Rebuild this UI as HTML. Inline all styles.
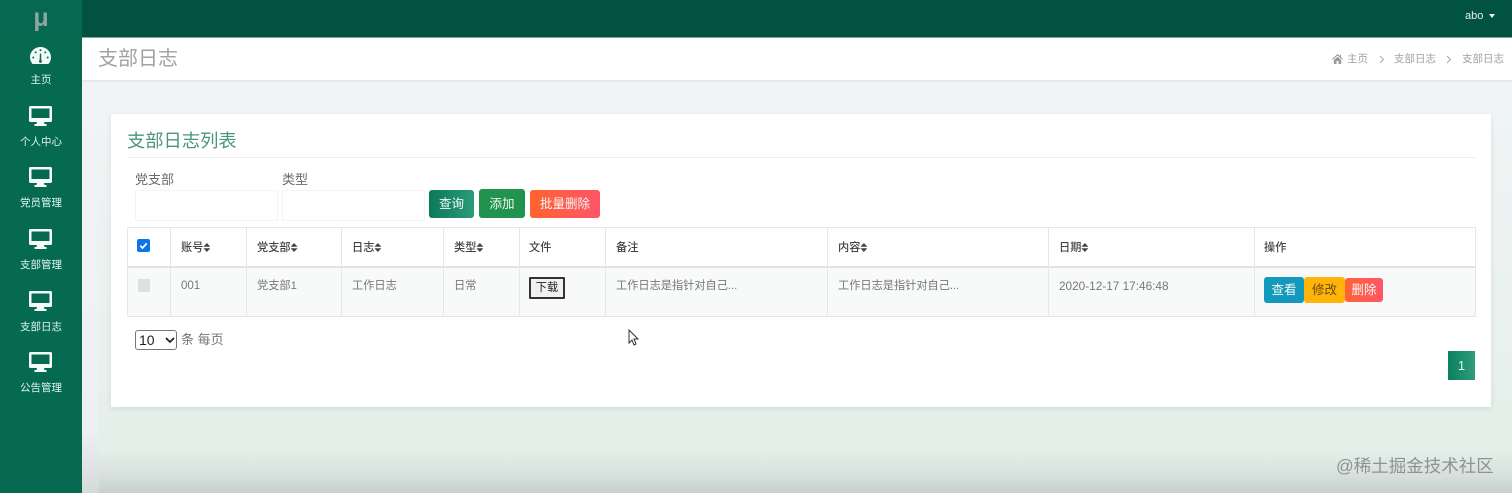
<!DOCTYPE html>
<html lang="zh"><head><meta charset="utf-8"><title>支部日志</title>
<style>
*{box-sizing:border-box}
html,body{margin:0;padding:0;width:1512px;height:493px;overflow:hidden;background:#e6f0eb;font-family:"Liberation Sans","Noto Sans CJK SC",sans-serif}
.a{position:absolute;white-space:nowrap}
#bg{left:82px;top:82px;width:1430px;height:411px;background:linear-gradient(180deg,#f0f4f5 0,#e9f1ee 60%,#e3efe9 90%,#d6dfdb 96%,#c8cfcc 100%)}
#bgl{left:82px;top:82px;width:17px;height:411px;background:linear-gradient(180deg,#f1f4f6,#edf0f3 85%,#d5dad8)}
#side{left:0;top:0;width:82px;height:493px;background:#056a50}
#logo{left:0;top:0;width:82px;height:37px;background:#066850;color:#8fa69e;font-size:25px;font-weight:bold;text-align:center;line-height:37px}
#top{left:82px;top:0;width:1430px;height:38px;background:#015240;border-bottom:1px solid #7fa9a0}
.user{left:1465px;top:10px;font-size:11px;color:#e4f0ec}
.caret{left:1489px;top:14px;width:0;height:0;border:3.5px solid transparent;border-top:4px solid #e4f0ec;border-bottom:0}
#hd{left:82px;top:38px;width:1430px;height:44px;background:#fff;border-bottom:2px solid #e7e9ec}
.ttl{left:98px;top:46px;font-size:20px;line-height:26px;color:#a2a2a2}
.bc{top:52px;font-size:10.5px;line-height:14px;color:#a0a0a0}
.mt{width:82px;left:0;text-align:center;font-size:10.5px;line-height:14px;color:#dff5ec}
#card{left:111px;top:114px;width:1380px;height:293px;background:#fff;box-shadow:0 2px 5px rgba(120,140,130,.18)}
.h2{left:127px;top:129px;font-size:18.300px;line-height:24px;color:#4a9676}
.hr{left:127px;top:157px;width:1349px;height:1px;background:#eef0ef}
.lb{top:172px;font-size:13px;line-height:16px;color:#6a6a6a}
.inp{top:190px;width:143px;height:31px;background:#fff;border:1px solid #f3f4f4;border-radius:2px}
.btn{color:#f3f8f5;font-size:12.5px;text-align:center;border-radius:3px}
.v{background:#e6e7e8;width:1px;top:227px;height:90px}
.th{top:241px;font-size:11.200px;line-height:14px;color:#444;font-weight:500}
.th i{display:inline-block;width:7px;height:9px;vertical-align:-1px;background:#444;clip-path:polygon(50% 0,100% 42%,0 42%,0 58%,100% 58%,50% 100%,0 58%,0 42%)}
.td{top:279px;font-size:11.200px;line-height:14px;color:#777}
</style></head><body>
<div class="a" id="bg"></div><div class="a" id="bgl"></div>
<div class="a" id="top"></div>
<div class="a user">abo</div><div class="a caret"></div>
<div class="a" id="side"></div>
<div class="a" id="logo">μ</div>

<svg class="a" style="left:30px;top:47px" width="21" height="17" viewBox="0 0 21 17"><path fill="#f2fbf7" fill-rule="evenodd" d="M10.500 0C4.700 0 0 4.600 0 10.300c0 2.600 1 5 2.500 6.700h16c1.600-1.700 2.500-4.100 2.500-6.700C21 4.600 16.300 0 10.500 0ZM10.500 2.200a1 1 0 1 1 0 2a1 1 0 0 1 0-2ZM5.700 4.400a1 1 0 1 1 0 2a1 1 0 0 1 0-2ZM15.300 4.400a1 1 0 1 1 0 2a1 1 0 0 1 0-2ZM3.300 9.500a1 1 0 1 1 0 2a1 1 0 0 1 0-2ZM17.700 9.500a1 1 0 1 1 0 2a1 1 0 0 1 0-2ZM9.900 6.500l1.200 0l.2 6.600a1.500 1.500 0 1 1-1.700 0Z"/></svg>
<div class="a mt" style="top:73px">主页</div>

<svg class="a" style="left:29px;top:106px" width="23" height="20" viewBox="0 0 23 20"><path fill="#f5fbf8" fill-rule="evenodd" d="M1.500 0h20A1.500 1.500 0 0 1 23 1.500v13a1.500 1.500 0 0 1-1.500 1.500H15l.5 2h2v2H5.500v-2h2l.5-2H1.500A1.500 1.500 0 0 1 0 14.500v-13A1.500 1.500 0 0 1 1.500 0ZM2.500 2.500v9.500h18V2.500Z"/></svg>
<div class="a mt" style="top:135px">个人中心</div>
<svg class="a" style="left:29px;top:167px" width="23" height="20" viewBox="0 0 23 20"><path fill="#f5fbf8" fill-rule="evenodd" d="M1.500 0h20A1.500 1.500 0 0 1 23 1.500v13a1.500 1.500 0 0 1-1.500 1.500H15l.5 2h2v2H5.500v-2h2l.5-2H1.500A1.500 1.500 0 0 1 0 14.500v-13A1.500 1.500 0 0 1 1.500 0ZM2.500 2.500v9.500h18V2.500Z"/></svg>
<div class="a mt" style="top:196px">党员管理</div>
<svg class="a" style="left:29px;top:229px" width="23" height="20" viewBox="0 0 23 20"><path fill="#f5fbf8" fill-rule="evenodd" d="M1.500 0h20A1.500 1.500 0 0 1 23 1.500v13a1.500 1.500 0 0 1-1.500 1.500H15l.5 2h2v2H5.500v-2h2l.5-2H1.500A1.500 1.500 0 0 1 0 14.500v-13A1.500 1.500 0 0 1 1.500 0ZM2.500 2.500v9.500h18V2.500Z"/></svg>
<div class="a mt" style="top:258px">支部管理</div>
<svg class="a" style="left:29px;top:291px" width="23" height="20" viewBox="0 0 23 20"><path fill="#f5fbf8" fill-rule="evenodd" d="M1.500 0h20A1.500 1.500 0 0 1 23 1.500v13a1.500 1.500 0 0 1-1.500 1.500H15l.5 2h2v2H5.500v-2h2l.5-2H1.500A1.500 1.500 0 0 1 0 14.500v-13A1.500 1.500 0 0 1 1.500 0ZM2.500 2.500v9.500h18V2.500Z"/></svg>
<div class="a mt" style="top:320px">支部日志</div>
<svg class="a" style="left:29px;top:352px" width="23" height="20" viewBox="0 0 23 20"><path fill="#f5fbf8" fill-rule="evenodd" d="M1.500 0h20A1.500 1.500 0 0 1 23 1.500v13a1.500 1.500 0 0 1-1.500 1.500H15l.5 2h2v2H5.500v-2h2l.5-2H1.500A1.500 1.500 0 0 1 0 14.500v-13A1.500 1.500 0 0 1 1.500 0ZM2.500 2.500v9.500h18V2.500Z"/></svg>
<div class="a mt" style="top:381px">公告管理</div>

<div class="a" id="hd"></div>
<div class="a ttl">支部日志</div>
<svg class="a" style="left:1332px;top:54px" width="11" height="10" viewBox="0 0 11 10"><path fill="#999" d="M5.500 0L0 5l.7.7L5.500 1.500l4.800 4.200L11 5L9 3.200V.7H7.800v1.400ZM1.800 6v4h2.700V7h2v3h2.700V6L5.500 2.800Z"/></svg>
<div class="a bc" style="left:1347px">主页</div>
<svg class="a" style="left:1379px;top:55px" width="6" height="9" viewBox="0 0 6 9"><path d="M1 1l3.500 3.500L1 8" fill="none" stroke="#aaa" stroke-width="1"/></svg>
<div class="a bc" style="left:1394px">支部日志</div>
<svg class="a" style="left:1446px;top:55px" width="6" height="9" viewBox="0 0 6 9"><path d="M1 1l3.500 3.500L1 8" fill="none" stroke="#aaa" stroke-width="1"/></svg>
<div class="a bc" style="left:1462px">支部日志</div>

<div class="a" id="card"></div>
<div class="a h2">支部日志列表</div>
<div class="a hr"></div>
<div class="a lb" style="left:135px">党支部</div>
<div class="a lb" style="left:282px">类型</div>
<div class="a inp" style="left:135px"></div>
<div class="a inp" style="left:282px"></div>
<div class="a btn" style="left:429px;top:190px;width:45px;height:28px;line-height:29px;background:linear-gradient(90deg,#0b7a5b,#2b9a78)">查询</div>
<div class="a btn" style="left:479px;top:189px;width:46px;height:29px;line-height:30px;background:#21934f">添加</div>
<div class="a btn" style="left:530px;top:190px;width:70px;height:28px;line-height:29px;background:linear-gradient(90deg,#ff6430,#ff5468)">批量删除</div>

<div class="a" style="left:127px;top:267px;width:1348px;height:50px;background:#f8f9f9"></div>
<div class="a" style="left:127px;top:227px;width:1348px;height:1px;background:#e7e8e9"></div>
<div class="a" style="left:127px;top:266px;width:1348px;height:2px;background:#e2e3e4"></div>
<div class="a" style="left:127px;top:316px;width:1348px;height:1px;background:#e2e3e4"></div>
<div class="a v" style="left:127px"></div><div class="a v" style="left:170px"></div><div class="a v" style="left:246px"></div><div class="a v" style="left:341px"></div><div class="a v" style="left:443px"></div><div class="a v" style="left:519px"></div><div class="a v" style="left:605px"></div><div class="a v" style="left:827px"></div><div class="a v" style="left:1048px"></div><div class="a v" style="left:1254px"></div><div class="a v" style="left:1475px"></div>

<div class="a" style="left:137px;top:239px;width:13px;height:13px;background:#0b76ec;border-radius:2px"></div>
<svg class="a" style="left:137px;top:239px" width="13" height="13" viewBox="0 0 13 13"><path d="M3.300 6.800L5.500 9L9.800 4.300" fill="none" stroke="#fff" stroke-width="1.800"/></svg>
<div class="a" style="left:138px;top:279px;width:12px;height:13px;background:#dfe0e1;border-radius:1px"></div>

<div class="a th" style="left:181px">账号<i></i></div>
<div class="a th" style="left:257px">党支部<i></i></div>
<div class="a th" style="left:352px">日志<i></i></div>
<div class="a th" style="left:454px">类型<i></i></div>
<div class="a th" style="left:529px">文件</div>
<div class="a th" style="left:616px">备注</div>
<div class="a th" style="left:838px">内容<i></i></div>
<div class="a th" style="left:1059px">日期<i></i></div>
<div class="a th" style="left:1264px">操作</div>

<div class="a td" style="left:181px;font-size:11.500px">001</div>
<div class="a td" style="left:257px">党支部1</div>
<div class="a td" style="left:352px">工作日志</div>
<div class="a td" style="left:454px">日常</div>
<div class="a" style="left:529px;top:277px;width:36px;height:22px;background:#f0f0f0;border:2px solid #333;border-radius:1px;font-size:11.200px;line-height:19px;text-align:center;color:#222">下载</div>
<div class="a td" style="left:616px">工作日志是指针对自己...</div>
<div class="a td" style="left:838px">工作日志是指针对自己...</div>
<div class="a td" style="left:1059px;font-size:11.800px">2020-12-17 17:46:48</div>

<div class="a btn" style="left:1264px;top:277px;width:40px;height:26px;line-height:27px;background:#1299bb">查看</div>
<div class="a btn" style="left:1304px;top:277px;width:41px;height:26px;line-height:27px;background:#ffb40a;color:#6a4a10">修改</div>
<div class="a btn" style="left:1345px;top:278px;width:38px;height:24px;line-height:25px;background:linear-gradient(90deg,#ff6236,#ff5568)">删除</div>

<div class="a" style="left:135px;top:330px;width:42px;height:20px;border:1px solid #777;border-radius:3px;background:#fff;font-size:14px;line-height:19px;color:#222;padding-left:3px">10</div>
<svg class="a" style="left:165px;top:337px" width="10" height="7" viewBox="0 0 10 7"><path d="M1 1l4 4l4-4" fill="none" stroke="#222" stroke-width="1.800"/></svg>
<div class="a" style="left:181px;top:332px;font-size:13px;line-height:16px;color:#777">条 每页</div>

<div class="a" style="left:1448px;top:351px;width:27px;height:29px;background:linear-gradient(90deg,#0b7f5e,#2f9e79);color:#e9f5f0;font-size:13px;line-height:29px;text-align:center">1</div>

<svg class="a" style="left:628px;top:329px" width="12" height="18" viewBox="0 0 12 18"><path d="M1 1v13l3-3l2 5l2-1l-2-5h4Z" fill="#fff" stroke="#333" stroke-width="1"/></svg>

<div class="a" style="left:1336px;top:454px;font-size:17.500px;line-height:24px;color:#8d9391">@稀土掘金技术社区</div>
</body></html>
